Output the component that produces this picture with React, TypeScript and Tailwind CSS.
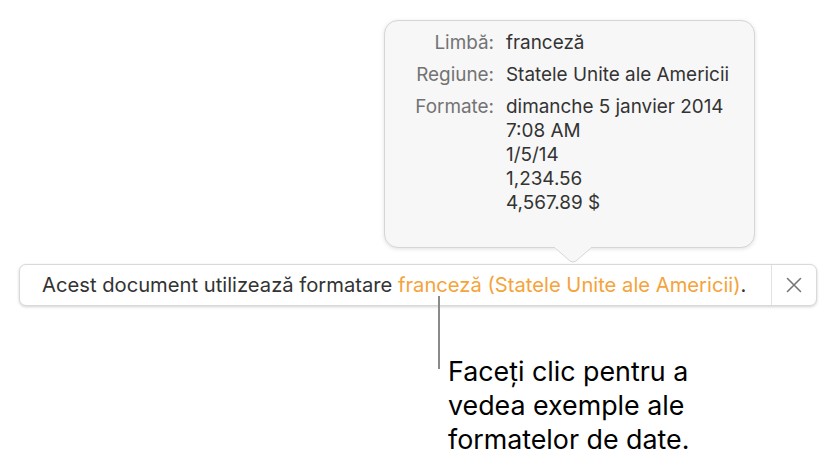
import React from 'react'

const font = { fontFamily: 'Inter, "Liberation Sans", Arial, sans-serif' }

function InfoRow({ label, values }: { label: string; values: string[] }) {
  return (
    <div className="flex">
      <div className="w-[109px] shrink-0 text-right text-[#737373]">{label}</div>
      <div className="pl-[12px] text-[#333333]">
        {values.map(v => (
          <div key={v} className="leading-[24px]">{v}</div>
        ))}
      </div>
    </div>
  )
}

export default function App() {
  return (
    <div className="w-[836px] h-[465px] bg-white overflow-hidden" style={font}>
      {/* popover */}
      <div className="relative ml-[384px] mt-[20px] w-[371px] h-[228px] rounded-[14px] bg-[#f7f7f7] border border-[#d6d6d6] shadow-[0_1px_4px_rgba(0,0,0,0.12)]">
        <div className="flex flex-col gap-[8px] pt-[10px] text-[18.9px] leading-[24px]">
          <InfoRow label="Limbă:" values={['franceză']} />
          <InfoRow label="Regiune:" values={['Statele Unite ale Americii']} />
          <InfoRow label="Formate:" values={['dimanche 5 janvier 2014', '7:08 AM', '1/5/14', '1,234.56', '4,567.89 $']} />
        </div>
        <svg className="absolute left-[170px] top-[226px]" width="36" height="16" viewBox="0 0 36 16">
          <path d="M0 1 L15 14 Q18 16 21 14 L36 1" fill="#f7f7f7" stroke="#d6d6d6" strokeWidth="1" />
          <rect x="0" y="0" width="36" height="1.2" fill="#f7f7f7" />
        </svg>
      </div>

      {/* notice bar */}
      <div className="ml-[19px] mt-[16px] w-[798px] h-[42px] flex items-center rounded-[7px] bg-white border border-[#d9d9d9] shadow-[0_1px_3px_rgba(0,0,0,0.18)]">
        <div className="flex-1 pl-[22px] text-[20.2px] text-[#333333] whitespace-nowrap">
          Acest document utilizează formatare{' '}
          <span className="text-[#f5a33b]">franceză (Statele Unite ale Americii)</span>.
        </div>
        <div className="w-[45px] h-full border-l border-[#e2e2e2] flex items-center justify-center">
          <svg width="16" height="16" viewBox="0 0 16 16">
            <path d="M1.5 1.5 L14.5 14.5 M14.5 1.5 L1.5 14.5" stroke="#777" strokeWidth="1.6" strokeLinecap="round" />
          </svg>
        </div>
      </div>

      {/* callout */}
      <div className="ml-[438px] -mt-[10px] flex">
        <div className="w-[2px] h-[73px] bg-[#8a8a8a]" />
        <div className="pl-[8px] pt-[58px] text-[26.8px] leading-[34px] text-black">
          Faceți clic pentru a<br />vedea exemple ale<br />formatelor de date.
        </div>
      </div>
    </div>
  )
}
